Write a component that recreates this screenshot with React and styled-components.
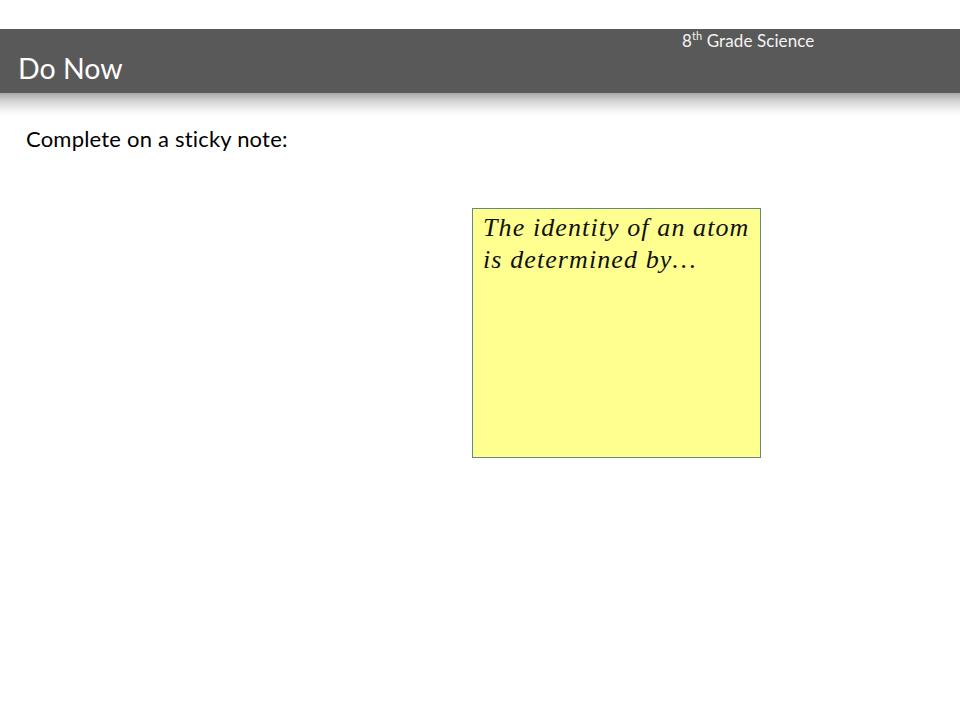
import React from "react";
import styled, { createGlobalStyle } from "styled-components";

const GlobalStyle = createGlobalStyle`
  html, body {
    margin: 0;
    padding: 0;
    background: #fff;
  }
`;

const Slide = styled.div`
  width: 960px;
  height: 720px;
  padding-top: 29px;
  box-sizing: border-box;
  overflow: hidden;
  font-family: Lato, "Open Sans", sans-serif;
  display: flex;
  flex-direction: column;
`;

const TitleBar = styled.div`
  height: 64px;
  flex: none;
  background: #595959;
  color: #fff;
  display: flex;
  flex-direction: column;
`;

const GradeLine = styled.div`
  font-size: 17px;
  letter-spacing: 0.1px;
  line-height: 22px;
  padding: 1px 0 0 682px;
  height: 21px;
  box-sizing: border-box;
  color: #f4f4f4;
  sup {
    font-size: 11px;
    line-height: 0;
  }
`;

const Title = styled.h1`
  margin: 1px 0 0;
  padding-left: 18px;
  font-size: 28.5px;
  font-weight: 400;
  line-height: 34px;
`;

const BarShadow = styled.div`
  height: 23px;
  flex: none;
  background: linear-gradient(#a8a8a8, #d8d8d8 40%, #f6f6f6 80%, #ffffff);
`;

const Prompt = styled.p`
  margin: 10px 0 0;
  padding-left: 26px;
  font-size: 22px;
  letter-spacing: 0.2px;
  line-height: 26px;
  color: #000;
`;

const StickyNote = styled.div`
  width: 289px;
  height: 250px;
  margin: 56px 0 0 472px;
  padding: 3px 6px 0 10px;
  box-sizing: border-box;
  background: #ffff8f;
  border: 1px solid #64878a;
  font-family: "Liberation Serif", serif;
  font-style: italic;
  font-size: 26px;
  letter-spacing: 1.1px;
  line-height: 32px;
  color: #111;
  white-space: nowrap;
`;

export default function App() {
  return (
    <>
      <GlobalStyle />
      <Slide>
        <TitleBar>
          <GradeLine>
            8<sup>th</sup> Grade Science
          </GradeLine>
          <Title>Do Now</Title>
        </TitleBar>
        <BarShadow />
        <Prompt>Complete on a sticky note:</Prompt>
        <StickyNote>
          The identity of an atom
          <br />
          is determined by…
        </StickyNote>
      </Slide>
    </>
  );
}
